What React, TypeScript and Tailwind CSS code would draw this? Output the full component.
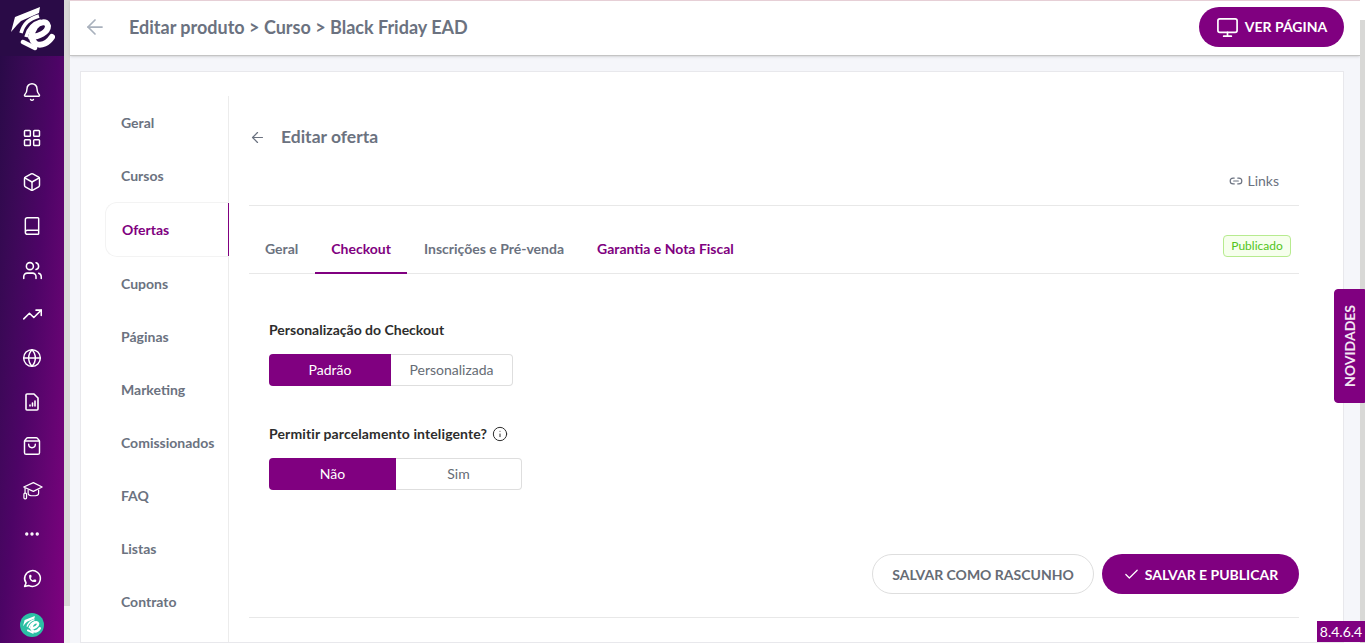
import React from 'react';
import {
  ArrowLeft,
  Bell,
  Book,
  Box,
  Check,
  Globe,
  Info,
  LayoutGrid,
  Link2,
  Monitor,
  MoreHorizontal,
  ShoppingBag,
  TrendingUp,
  Users,
} from 'lucide-react';
import { TbBrandWhatsapp } from 'react-icons/tb';

function Logo({ size, color }: { size: number; color: string }) {
  return (
    <svg width={size} height={size} viewBox="0 0 44 44" fill="none">
      <path d="M29 0 L4 10 L0 25 L6 18 L10 14 L28 6 Z" fill={color} />
      <path d="M28 9 C18 12 13 16 10 26" stroke={color} strokeWidth="3.5" />
      <path d="M30 14 C23 16 17 21 15 30" stroke={color} strokeWidth="3.5" />
      <path
        d="M20 30 C28 30 37 25 37 19 C36 13 28 15 24 20 C20 26 19 33 25 37 C31 39 37 36 41 30"
        stroke={color}
        strokeWidth="6"
        strokeLinecap="round"
      />
      <path d="M12 35 L24 41" stroke={color} strokeWidth="4.5" strokeLinecap="round" />
    </svg>
  );
}

function FileChart() {
  return (
    <svg width="20" height="20" viewBox="0 0 20 20" fill="none" stroke="currentColor" strokeWidth="1.6">
      <path d="M5 2h7l4 4v11a1 1 0 0 1-1 1H5a1 1 0 0 1-1-1V3a1 1 0 0 1 1-1z" strokeLinejoin="round" />
      <path d="M8 14v-1M10.5 14v-3M13 14V9" strokeLinecap="round" />
    </svg>
  );
}

function CapIcon() {
  return (
    <svg width="21" height="21" viewBox="0 0 24 24" fill="none" stroke="currentColor" strokeWidth="1.4" strokeLinejoin="round">
      <path d="M13 3 L2 8 L13 13 L23 8 Z" />
      <path d="M7 11 V15 C7 17 10 18 13 18 C16 18 19 17 19 15 V11" />
      <path d="M3.5 9 V15" />
      <rect x="2.2" y="15" width="3" height="6.5" rx="1.2" />
    </svg>
  );
}

const railIcons = [
  <Bell size={20} strokeWidth={1.75} />,
  <LayoutGrid size={20} strokeWidth={1.75} />,
  <Box size={20} strokeWidth={1.75} />,
  <Book size={20} strokeWidth={1.75} />,
  <Users size={21} strokeWidth={1.75} />,
  <TrendingUp size={21} strokeWidth={1.75} />,
  <Globe size={20} strokeWidth={1.75} />,
  <FileChart />,
  <ShoppingBag size={20} strokeWidth={1.75} />,
  <CapIcon />,
  <MoreHorizontal size={18} strokeWidth={2.5} />,
  <TbBrandWhatsapp size={21} strokeWidth={1.75} />,
];

const navItems = ['Geral', 'Cursos', 'Ofertas', 'Cupons', 'Páginas', 'Marketing', 'Comissionados', 'FAQ', 'Listas', 'Contrato'];

function Sidebar() {
  return (
    <aside className="w-16 h-full shrink-0 flex flex-col items-center bg-gradient-to-br from-[#260a45] via-[#4d0466] to-[#800080]">
      <div className="w-full h-14 shrink-0 bg-[#2a0b47] flex items-start pl-[11px] pt-[7px]">
        <Logo size={44} color="#ffffff" />
      </div>
      <div className="flex flex-col items-center pt-[14px] text-white">
        {railIcons.map((icon, i) => (
          <div key={i} className={i === 1 ? 'h-11 w-11 mt-[2px] flex items-center justify-center' : 'h-11 w-11 flex items-center justify-center'}>
            {icon}
          </div>
        ))}
      </div>
      <div className="w-6 h-6 mt-[13px] rounded-full bg-[#2bbfa5] flex items-center justify-center">
        <Logo size={18} color="#ffffff" />
      </div>
    </aside>
  );
}

function SideNav() {
  return (
    <nav className="w-[124px] ml-6 mt-6 shrink-0 border-r border-[#ececec] flex flex-col">
      {navItems.map((item) =>
        item === 'Ofertas' ? (
          <div
            key={item}
            className="h-[55px] -mr-px flex items-center pl-4 text-sm font-bold text-[#800080] border-y border-l border-[#f3f3f3] rounded-l-xl relative"
          >
            {item}
            <span className="absolute right-0 top-0 bottom-0 w-px bg-[#800080]" />
          </div>
        ) : (
          <div key={item} className="h-[53px] flex items-center pl-4 text-sm font-bold text-[#6b7280]">
            {item}
          </div>
        ),
      )}
    </nav>
  );
}

function Segmented({ options, widths }: { options: string[]; widths: string[] }) {
  return (
    <div className="flex h-8 text-sm">
      <div className={`${widths[0]} rounded-l bg-[#800080] text-white flex items-center justify-center`}>{options[0]}</div>
      <div className={`${widths[1]} rounded-r border border-l-0 border-[#dedede] text-[#666c75] flex items-center justify-center`}>
        {options[1]}
      </div>
    </div>
  );
}

function Content() {
  return (
    <div className="w-[1050px] ml-5 mt-6 shrink-0 flex flex-col">
      <div className="h-[34px] mt-6 flex items-center text-[#6b7280]">
        <ArrowLeft size={17} strokeWidth={1.75} />
        <span className="ml-[15px] text-[17.5px] font-bold">Editar oferta</span>
      </div>
      <div className="h-[53px] mt-[-1px] pr-5 flex items-end justify-end border-b border-[#e8e8e8] pb-[14px] text-sm text-[#6b7280]">
        <span className="flex items-center gap-1 h-5">
          <Link2 size={14} strokeWidth={2} />
          Links
        </span>
      </div>
      <div className="h-[68px] flex items-end justify-between border-b border-[#e8e8e8] pr-2 text-sm font-bold text-[#6b7280]">
        <div className="flex items-end">
          <div className="h-[49px] pl-4 pr-[17px] flex items-center">Geral</div>
          <div className="h-[49px] -mb-px px-4 flex items-center text-[#800080] border-b-2 border-[#800080]">Checkout</div>
          <div className="h-[49px] ml-px px-4 flex items-center">Inscrições e Pré-venda</div>
          <div className="h-[49px] ml-px px-4 flex items-center text-[#800080]">Garantia e Nota Fiscal</div>
        </div>
        <div className="w-[68px] h-[22px] mb-4 flex items-center justify-center rounded border border-[#b7eb8f] bg-[#f6ffed] text-xs font-normal text-[#52c41a]">
          Publicado
        </div>
      </div>
      <div className="pl-5 pt-[47px]">
        <p className="text-sm font-bold leading-[17px] text-[#2d2d2d]">Personalização do Checkout</p>
        <div className="mt-4">
          <Segmented options={['Padrão', 'Personalizada']} widths={['w-[122px]', 'w-[122px]']} />
        </div>
        <p className="mt-[39px] flex items-center gap-[5px] text-sm font-bold leading-[17px] tracking-[0.12px] text-[#2d2d2d]">
          Permitir parcelamento inteligente?
          <Info size={16} strokeWidth={1.5} />
        </p>
        <div className="mt-4">
          <Segmented options={['Não', 'Sim']} widths={['w-[127px]', 'w-[126px]']} />
        </div>
      </div>
      <div className="mt-[64px] flex justify-end gap-2 pb-[23px] border-b border-[#e8e8e8] text-sm font-bold">
        <button className="w-[222px] h-10 pt-px rounded-full border border-[#dedede] text-[#666c75]">SALVAR COMO RASCUNHO</button>
        <button className="w-[197px] h-10 pt-px rounded-full bg-[#800080] text-white flex items-center justify-center gap-[5px]">
          <Check size={17} strokeWidth={1.75} />
          SALVAR E PUBLICAR
        </button>
      </div>
    </div>
  );
}

export default function App() {
  return (
    <div className="relative w-[1365px] h-[643px] overflow-hidden flex bg-[#f5f6fa] font-['Lato','Liberation_Sans',sans-serif]">
      <Sidebar />
      <div className="w-[6px] h-full shrink-0 flex flex-col">
        <div className="h-[606px] bg-[#d8d8d6]" />
        <div className="flex-1 bg-[#f1f1f1]" />
      </div>
      <main className="flex-1 min-w-0 flex flex-col">
        <header className="h-[56px] shrink-0 bg-white border-t border-[#e6cfd6] border-b border-b-[#c4c4c4] shadow-sm flex items-center pb-[2px] pl-[13px] pr-[16px]">
          <ArrowLeft size={24} strokeWidth={1.75} className="text-[#a9b1bd]" />
          <h1 className="ml-[22px] text-lg font-bold text-[#6b7280]">Editar produto &gt; Curso &gt; Black Friday EAD</h1>
          <button className="ml-auto w-[145px] h-10 rounded-full bg-[#800080] text-white text-sm font-bold flex items-center justify-center gap-[6px]">
            <Monitor size={23} strokeWidth={1.75} />
            VER PÁGINA
          </button>
        </header>
        <div className="flex-1 min-h-0 pl-[10px] pr-[16px] pt-[15px]">
          <section className="w-[1264px] h-full bg-white border border-[#e8e8ec] flex">
            <SideNav />
            <Content />
          </section>
        </div>
      </main>
      <div className="w-[5px] h-full shrink-0 flex flex-col">
        <div className="h-5 bg-white" />
        <div className="flex-1 bg-[#d8d8d6]" />
      </div>
      <div className="absolute right-0 top-[289px] w-[31px] h-[114px] bg-[#800080] rounded-l border border-[#800080] flex items-center justify-center">
        <span className="-rotate-90 translate-x-px text-sm font-bold text-[#f3e6f3] whitespace-nowrap">NOVIDADES</span>
      </div>
      <div className="absolute left-[1317px] top-[621px] w-12 h-[21px] bg-[#800080] text-white text-sm flex items-center justify-center">8.4.6.4</div>
    </div>
  );
}
